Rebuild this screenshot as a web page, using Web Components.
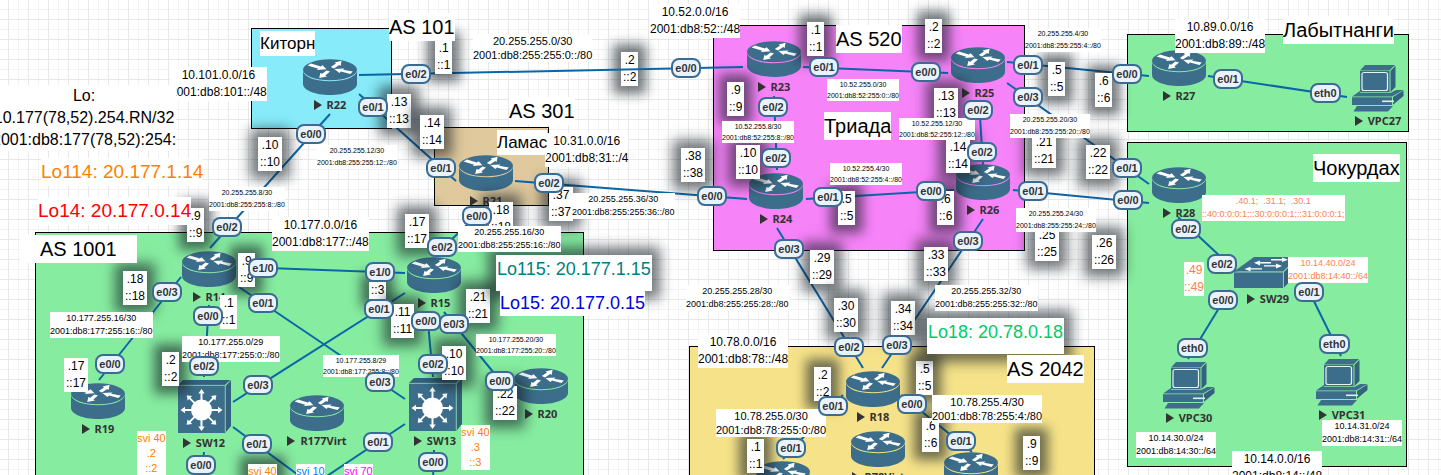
<!DOCTYPE html>
<html lang="ru">
<head>
<meta charset="utf-8">
<title>Network topology</title>
<style>
body { margin: 0; font-family: "Liberation Sans", Arial, sans-serif; color: #000; }
</style>
</head>
<body>
<topo-canvas>
  <topo-area x="251" y="28" w="141" h="101" tone="cyan"></topo-area>
  <topo-area x="434" y="127" w="115" h="79" tone="sand"></topo-area>
  <topo-area x="713" y="25" w="312" h="226" tone="pink"></topo-area>
  <topo-area x="1127" y="34" w="282" h="98" tone="green"></topo-area>
  <topo-area x="1127" y="142" w="280" h="325" tone="green"></topo-area>
  <topo-area x="35" y="232" w="549" h="320" tone="green"></topo-area>
  <topo-area x="689" y="346" w="406" h="206" tone="yellow"></topo-area>

  <topo-label x="621" y="52" kind="pair" glow>.2<br>::2</topo-label>

  <topo-links></topo-links>

  <topo-node x="303" y="59" kind="router">R22</topo-node>
  <topo-node x="459" y="155" kind="router">R21</topo-node>
  <topo-node x="747" y="41" kind="router">R23</topo-node>
  <topo-node x="951" y="47" kind="router">R25</topo-node>
  <topo-node x="749" y="173" kind="router">R24</topo-node>
  <topo-node x="956" y="164" kind="router">R26</topo-node>
  <topo-node x="1152" y="50" kind="router">R27</topo-node>
  <topo-node x="1152" y="167" kind="router">R28</topo-node>
  <topo-node x="182" y="251" kind="router">R14</topo-node>
  <topo-node x="407" y="257" kind="router">R15</topo-node>
  <topo-node x="71" y="383" kind="router">R19</topo-node>
  <topo-node x="290" y="395" kind="router">R177Virt</topo-node>
  <topo-node x="514" y="368" kind="router">R20</topo-node>
  <topo-node x="846" y="371" kind="router">R18</topo-node>
  <topo-node x="851" y="431" kind="router">R78Virt</topo-node>
  <topo-node x="756" y="461" kind="router"></topo-node>
  <topo-node x="944" y="452" kind="router"></topo-node>
  <topo-node x="177" y="380" kind="core">SW12</topo-node>
  <topo-node x="408" y="378" kind="core">SW13</topo-node>
  <topo-node x="1234" y="257" kind="switch">SW29</topo-node>
  <topo-node x="1351" y="65" kind="pc">VPC27</topo-node>
  <topo-node x="1162" y="362" kind="pc">VPC30</topo-node>
  <topo-node x="1315" y="359" kind="pc">VPC31</topo-node>

  <topo-label x="258" y="137" kind="pair" glow>.10<br>::10</topo-label>
  <topo-label x="187" y="208" kind="pair" glow>.9<br>::9</topo-label>
  <topo-label x="435" y="40" kind="pair" glow>.1<br>::1</topo-label>
  <topo-label x="387" y="94" kind="pair" glow>.13<br>::13</topo-label>
  <topo-label x="420" y="115" kind="pair" glow>.14<br>::14</topo-label>
  <topo-label x="681" y="148" kind="pair" glow>.38<br>::38</topo-label>
  <topo-label x="549" y="187" kind="pair" glow>.37<br>::37</topo-label>
  <topo-label x="405" y="214" kind="pair" glow>.17<br>::17</topo-label>
  <topo-label x="489" y="202" kind="pair" glow>.18<br>::18</topo-label>
  <topo-label x="807" y="22" kind="pair" glow>.1<br>::1</topo-label>
  <topo-label x="925" y="19" kind="pair" glow>.2<br>::2</topo-label>
  <topo-label x="727" y="82" kind="pair" glow>.9<br>::9</topo-label>
  <topo-label x="934" y="88" kind="pair" glow>.13<br>::13</topo-label>
  <topo-label x="736" y="145" kind="pair" glow>.10<br>::10</topo-label>
  <topo-label x="946" y="139" kind="pair" glow>.14<br>::14</topo-label>
  <topo-label x="838" y="191" kind="pair" glow>.5<br>::5</topo-label>
  <topo-label x="937" y="191" kind="pair" glow>.6<br>::6</topo-label>
  <topo-label x="1048" y="62" kind="pair" glow>.5<br>::5</topo-label>
  <topo-label x="1095" y="73" kind="pair" glow>.6<br>::6</topo-label>
  <topo-label x="1032" y="134" kind="pair" glow>.21<br>::21</topo-label>
  <topo-label x="1086" y="145" kind="pair" glow>.22<br>::22</topo-label>
  <topo-label x="1035" y="227" kind="pair" glow>.25<br>::25</topo-label>
  <topo-label x="1092" y="235" kind="pair" glow>.26<br>::26</topo-label>
  <topo-label x="123" y="271" kind="pair" glow>.18<br>::18</topo-label>
  <topo-label x="238" y="253" kind="pair" glow>.9<br>::9</topo-label>
  <topo-label x="220" y="295" kind="pair">.1<br>::1</topo-label>
  <topo-label x="162" y="352" kind="pair" glow>.2<br>::2</topo-label>
  <topo-label x="64" y="358" kind="pair">.17<br>::17</topo-label>
  <topo-label x="369" y="282" kind="pair" glow>::3</topo-label>
  <topo-label x="391" y="304" kind="pair" glow>.11<br>::11</topo-label>
  <topo-label x="466" y="289" kind="pair" glow>.21<br>::21</topo-label>
  <topo-label x="442" y="346" kind="pair" glow>.10<br>::10</topo-label>
  <topo-label x="493" y="386" kind="pair" glow>.22<br>::22</topo-label>
  <topo-label x="810" y="250" kind="pair" glow>.29<br>::29</topo-label>
  <topo-label x="924" y="247" kind="pair" glow>.33<br>::33</topo-label>
  <topo-label x="834" y="298" kind="pair" glow>.30<br>::30</topo-label>
  <topo-label x="891" y="301" kind="pair" glow>.34<br>::34</topo-label>
  <topo-label x="814" y="367" kind="pair" glow>.2<br>::2</topo-label>
  <topo-label x="916" y="361" kind="pair" glow>.5<br>::5</topo-label>
  <topo-label x="922" y="418" kind="pair" glow>.6<br>::6</topo-label>
  <topo-label x="747" y="439" kind="pair" glow>.1<br>::1</topo-label>
  <topo-label x="1023" y="436" kind="pair" glow>.9<br>::9</topo-label>
  <topo-label x="1184" y="262" tone="coral">.49<br>::49</topo-label>

  <topo-label x="496" y="255" kind="loop" tone="teal" glow>Lo115: 20.177.1.15</topo-label>
  <topo-label x="927" y="318" kind="loop" tone="mint" glow>Lo18: 20.78.0.18</topo-label>

  <topo-label x="170" y="67">10.101.0.0/16<br>2001:db8:101::/48</topo-label>
  <topo-label x="272" y="217">10.177.0.0/16<br>2001:db8:177::/48</topo-label>
  <topo-label x="650" y="4">10.52.0.0/16<br>2001:db8:52::/48</topo-label>
  <topo-label x="545" y="133">10.31.0.0/16<br>2001:db8:31::/4</topo-label>
  <topo-label x="1175" y="19">10.89.0.0/16<br>2001:db8:89::/48</topo-label>
  <topo-label x="698" y="334">10.78.0.0/16<br>2001:db8:78::/48</topo-label>
  <topo-label x="1232" y="451">10.14.0.0/16<br>2001:db8:14::/48</topo-label>

  <topo-label x="473" y="34" kind="s11">20.255.255.0/30<br>2001:db8:255:255:0::/80</topo-label>
  <topo-label x="716" y="409" kind="s11">10.78.255.0/30<br>2001:db8:78:255:0:/80</topo-label>
  <topo-label x="932" y="395" kind="s11">10.78.255.4/30<br>2001:db8:78:255:4:/80</topo-label>

  <topo-label x="572" y="193" kind="s9">20.255.255.36/30<br>2001:db8:255:255:36::/80</topo-label>
  <topo-label x="458" y="226" kind="s9">20.255.255.16/30<br>2001:db8:255:255:16::/80</topo-label>
  <topo-label x="686" y="285" kind="s9">20.255.255.28/30<br>2001:db8:255:255:28::/80</topo-label>
  <topo-label x="935" y="285" kind="s9">20.255.255.32/30<br>2001:db8:255:255:32::/80</topo-label>
  <topo-label x="50" y="312" kind="s9">10.177.255.16/30<br>2001:db8:177:255:16::/80</topo-label>
  <topo-label x="182" y="336" kind="s9">10.177.255.0/29<br>2001:db8:177:255:0::/80</topo-label>
  <topo-label x="1202" y="195" kind="s9" tone="coral">.40.1;&nbsp; .31.1;&nbsp; .30.1<br>::40:0:0:0:1;::30:0:0:0:1;::31:0:0:0:1;</topo-label>
  <topo-label x="1288" y="257" kind="s9" tone="coral">10.14.40.0/24<br>2001:db8:14:40::/64</topo-label>
  <topo-label x="1136" y="432" kind="s9">10.14.30.0/24<br>2001:db8:14:30::/64</topo-label>
  <topo-label x="1322" y="420" kind="s9">10.14.31.0/24<br>2001:db8:14:31::/64</topo-label>

  <topo-label x="209" y="187" kind="s7">20.255.255.8/30<br>2001:db8:255:255:8::/80</topo-label>
  <topo-label x="317" y="145" kind="s7">20.255.255.12/30<br>2001:db8:255:255:12::/80</topo-label>
  <topo-label x="1025" y="28" kind="s7">20.255.255.4/30<br>2001:db8:255:255:4::/80</topo-label>
  <topo-label x="1010" y="114" kind="s7">20.255.255.20/30<br>2001:db8:255:255:20::/80</topo-label>
  <topo-label x="1016" y="208" kind="s7">20.255.255.24/30<br>2001:db8:255:255:24::/80</topo-label>
  <topo-label x="827" y="79" kind="s7t">10.52.255.0/30<br>2001:db8:52:255:0::/80</topo-label>
  <topo-label x="722" y="121" kind="s7t">10.52.255.8/30<br>2001:db8:52:255:8::/80</topo-label>
  <topo-label x="899" y="118" kind="s7t">10.52.255.12/30<br>2001:db8:52:255:12::/80</topo-label>
  <topo-label x="830" y="163" kind="s7t">10.52.255.4/30<br>2001:db8:52:255:4::/80</topo-label>
  <topo-label x="323" y="355" kind="s7t">10.177.255.8/29<br>2001:db8:177:255:8::/80</topo-label>
  <topo-label x="476" y="334" kind="s7t">10.177.255.20/30<br>2001:db8:177:255:20::/80</topo-label>

  <topo-label x="389" y="13" kind="title">AS 101</topo-label>
  <topo-label x="509" y="97" kind="title">AS 301</topo-label>
  <topo-label x="836" y="25" kind="title">AS 520</topo-label>
  <topo-label x="20" y="235" kind="wide">AS 1001</topo-label>
  <topo-label x="1007" y="355" kind="title">AS 2042</topo-label>
  <topo-label x="824" y="112" kind="title">Триада</topo-label>
  <topo-label x="1283" y="16" kind="title">Лабытнанги</topo-label>
  <topo-label x="1313" y="154" kind="title">Чокурдах</topo-label>
  <topo-label x="260" y="31" kind="city">Киторн</topo-label>
  <topo-label x="497" y="130" kind="city">Ламас</topo-label>

  <topo-label x="-8" y="85" kind="note">Lo:<br>10.177(78,52).254.RN/32<br>2001:db8:177(78,52):254:</topo-label>
  <topo-label x="41" y="158" kind="lo" tone="orange">Lo114: 20.177.1.14</topo-label>
  <topo-label x="38" y="197" kind="lo" tone="red">Lo14: 20.177.0.14</topo-label>
  <topo-label x="500" y="290" kind="lo18" tone="blue">Lo15: 20.177.0.15</topo-label>

  <topo-label x="137" y="431" kind="svi" tone="orange">svi 40<br>.2<br>::2</topo-label>
  <topo-label x="461" y="425" kind="svi" tone="orange">svi 40<br>.3<br>::3</topo-label>
  <topo-label x="248" y="464" kind="svi" tone="orange" glow>svi 40</topo-label>
  <topo-label x="296" y="464" kind="svi" tone="azure">svi 10</topo-label>
  <topo-label x="344" y="464" kind="svi" tone="magenta">svi 70</topo-label>

  <topo-port x="401" y="64">e0/2</topo-port>
  <topo-port x="358" y="97">e0/1</topo-port>
  <topo-port x="296" y="124">e0/0</topo-port>
  <topo-port x="212" y="217">e0/2</topo-port>
  <topo-port x="671" y="58">e0/0</topo-port>
  <topo-port x="426" y="158">e0/1</topo-port>
  <topo-port x="462" y="206">e0/0</topo-port>
  <topo-port x="534" y="173">e0/2</topo-port>
  <topo-port x="697" y="186">e0/0</topo-port>
  <topo-port x="427" y="237">e0/2</topo-port>
  <topo-port x="809" y="57">e0/1</topo-port>
  <topo-port x="911" y="62">e0/0</topo-port>
  <topo-port x="1013" y="55">e0/1</topo-port>
  <topo-port x="1013" y="87">e0/3</topo-port>
  <topo-port x="758" y="97">e0/2</topo-port>
  <topo-port x="963" y="100">e0/2</topo-port>
  <topo-port x="761" y="148">e0/2</topo-port>
  <topo-port x="967" y="142">e0/2</topo-port>
  <topo-port x="813" y="187">e0/1</topo-port>
  <topo-port x="916" y="181">e0/0</topo-port>
  <topo-port x="1018" y="181">e0/1</topo-port>
  <topo-port x="774" y="239">e0/3</topo-port>
  <topo-port x="953" y="231">e0/3</topo-port>
  <topo-port x="1112" y="64">e0/0</topo-port>
  <topo-port x="1213" y="69">e0/1</topo-port>
  <topo-port x="1310" y="83">eth0</topo-port>
  <topo-port x="1112" y="158">e0/1</topo-port>
  <topo-port x="1113" y="190">e0/0</topo-port>
  <topo-port x="1171" y="219">e0/2</topo-port>
  <topo-port x="1207" y="254">e0/2</topo-port>
  <topo-port x="1208" y="290">e0/0</topo-port>
  <topo-port x="1294" y="282">e0/1</topo-port>
  <topo-port x="1177" y="338">eth0</topo-port>
  <topo-port x="1319" y="334">eth0</topo-port>
  <topo-port x="152" y="282">e0/3</topo-port>
  <topo-port x="248" y="258">e1/0</topo-port>
  <topo-port x="248" y="293">e0/1</topo-port>
  <topo-port x="193" y="306">e0/0</topo-port>
  <topo-port x="95" y="354">e0/0</topo-port>
  <topo-port x="189" y="356">e0/2</topo-port>
  <topo-port x="243" y="375">e0/3</topo-port>
  <topo-port x="242" y="434">e0/1</topo-port>
  <topo-port x="186" y="455">e0/0</topo-port>
  <topo-port x="365" y="262">e1/0</topo-port>
  <topo-port x="364" y="299">e0/1</topo-port>
  <topo-port x="411" y="311">e0/0</topo-port>
  <topo-port x="439" y="314">e0/3</topo-port>
  <topo-port x="418" y="354">e0/2</topo-port>
  <topo-port x="365" y="372">e0/3</topo-port>
  <topo-port x="485" y="371">e0/0</topo-port>
  <topo-port x="363" y="432">e0/1</topo-port>
  <topo-port x="418" y="452">e0/0</topo-port>
  <topo-port x="834" y="337">e0/2</topo-port>
  <topo-port x="882" y="335">e0/3</topo-port>
  <topo-port x="818" y="396">e0/1</topo-port>
  <topo-port x="897" y="394">e0/0</topo-port>
  <topo-port x="776" y="438">e0/1</topo-port>
  <topo-port x="946" y="431">e0/1</topo-port>
</topo-canvas>

<script>
/* Base for everything that sits at a free place on the canvas. */
class Placed extends HTMLElement {
  connectedCallback() {
    const root = this.shadowRoot || this.attachShadow({ mode: "open" });
    root.innerHTML = `<style>:host{position:absolute;box-sizing:border-box}${this.css()}</style>${this.html()}`;
    this.style.left = this.getAttribute("x") + "px";
    this.style.top = this.getAttribute("y") + "px";
  }
  css() { return ""; }
  html() { return "<slot></slot>"; }
}

customElements.define("topo-canvas", class extends HTMLElement {
  constructor() {
    super();
    this.attachShadow({ mode: "open" }).innerHTML = `<style>
      :host{display:block;position:relative;height:100vh;overflow:hidden;background-color:#fff;
        background-image:
          linear-gradient(90deg,#e8e8e8 1px,transparent 1px),linear-gradient(#e8e8e8 1px,transparent 1px),
          linear-gradient(90deg,#f3f3f3 1px,transparent 1px),linear-gradient(#f3f3f3 1px,transparent 1px);
        background-size:20px 20px;
        background-position:8px 0,0 19px,18px 0,0 9px}
    </style><slot></slot>`;
  }
});

customElements.define("topo-area", class extends Placed {
  css() {
    return `:host{display:block;border:1px solid #000;width:${this.getAttribute("w")}px;height:${this.getAttribute("h")}px}
      :host([tone=cyan]){background:#87ebf9}
      :host([tone=sand]){background:#dfc99d}
      :host([tone=pink]){background:#f783f9}
      :host([tone=green]){background:#86eca0}
      :host([tone=yellow]){background:#f6e389}`;
  }
});

customElements.define("topo-label", class extends Placed {
  css() {
    return `:host{display:block;background:#fff;white-space:nowrap;text-align:center;font-size:12px;line-height:17px}
      :host([kind=pair]){padding:0 2px}
      :host([kind=s11]){font-size:11px;line-height:14px}
      :host([kind=s9]){font-size:9px;line-height:13px}
      :host([kind=s7]){font-size:7px;line-height:12px}
      :host([kind=s7t]){font-size:7px;line-height:11px}
      :host([kind=title]){font-size:20px;line-height:28px}
      :host([kind=wide]){font-size:20px;line-height:28px;padding:0 20px}
      :host([kind=city]){font-size:17px;line-height:25px}
      :host([kind=note]){font-size:16px;line-height:22px}
      :host([kind=lo]){font-size:19px;line-height:28px}
      :host([kind=lo18]){font-size:18px;line-height:26px}
      :host([kind=loop]){font-size:18px;line-height:28px;padding:0 1px 8px}
      :host([kind=svi]){font-size:11px;line-height:15px}
      :host([tone=coral]){color:#ff7f50}
      :host([tone=teal]){color:#008080}
      :host([tone=mint]){color:#00cc66}
      :host([tone=orange]){color:#ff8000}
      :host([tone=red]){color:#f00}
      :host([tone=blue]){color:#0000e0}
      :host([tone=azure]){color:#007fff}
      :host([tone=magenta]){color:#f0f}
      :host([glow]){box-shadow:0 0 12px 8px rgba(20,30,36,.6)}`;
  }
});

customElements.define("topo-port", class extends Placed {
  css() {
    return `:host{display:block;padding:0 2px;border:2px solid #3b6b92;border-radius:8px;background:#e9f3fd;
      color:#333;font-size:11px;font-weight:bold;line-height:16px;min-width:30px;text-align:center}`;
  }
});

const BLUE = "#3c6e8c";
const ICONS = {
  router: `<svg width="54" height="36" viewBox="0 0 54 36" fill="${BLUE}">
    <ellipse cx="27" cy="10.8" rx="27" ry="10.5"/>
    <path d="M0 12.5C2 18.5 13 22.3 27 22.3S52 18.5 54 12.5V25C54 31 42 36 27 36S0 31 0 25Z"/>
    <g fill="#fff"><path d="M4.5 6.5L8 4.6L17.8 7.4L19.6 6.2L23.4 10.2L13.6 11L15.4 9.7Z"/>
    <path d="M49.8 12.6L47.4 15L38 12.6L36.4 14L31.4 10.1L41.6 9.4L40 10.7Z"/>
    <path d="M27.8 8L33 4.5L31.6 3.6L38.6 1.8L37.6 6.9L36.2 6L31 9.4Z"/>
    <path d="M27 12.4L23.4 11.6L19.2 14.7L17.4 14L16.2 19L24 17.6L22.3 16.6Z"/></g></svg>`,
  core: `<svg width="53" height="53" viewBox="0 0 53 53">
    <path d="M0 5L5 0H53L47 5Z" fill="#34617d"/><path d="M48 5.5L53 .5V46L48 52Z" fill="#34617d"/>
    <path d="M0 5.5H47.5V53H0Z" fill="${BLUE}"/><path d="M0 5.3H46.8L52.5 .3M47.2 5.5V52.5" fill="none" stroke="#86c8a8" stroke-width=".8"/>
    <g transform="translate(23.5 30)" fill="#fff"><circle r="10.5"/>
    ${[0,45,90,135,180,225,270,315].map(a => `<path transform="rotate(${a})" d="M-1 -9V-16.5H-3.2L0 -21L3.2 -16.5H1V-9Z"/>`).join("")}</g></svg>`,
  switch: `<svg width="68" height="31" viewBox="0 0 68 31">
    <path d="M0 14.5L20 0H64L49 14.5Z" fill="${BLUE}"/><path d="M0 15.3H49V31H0Z" fill="${BLUE}"/><path d="M50 15L64 1V16L50 30.5Z" fill="#34617d"/>
    <path d="M0 15H49.3L64 .6M49.4 15V31" fill="none" stroke="#86c8a8" stroke-width=".8"/>
    <g fill="#fff"><path d="M20 5.8L26 3.4V5H37V6.6H26V8.4Z"/><path d="M10.5 12L16.5 9.8V11.2H28V12.6H16.5V14.2Z"/>
    <path d="M54 2.8L48 .4V2H37V3.4H48V5Z"/><path d="M48 9L42 6.6V8.2H30V9.6H42V11.4Z"/></g></svg>`,
  pc: `<svg width="52" height="47" viewBox="0 0 52 47">
    <path d="M8 5.5L13 0H43L37.5 5.5Z" fill="${BLUE}"/><path d="M38.5 6L43.5 .8V22L38.5 27Z" fill="#34617d"/>
    <path d="M8 6H37.5V27H8Z" fill="${BLUE}"/><rect x="10" y="7.5" width="25.5" height="18" rx="2" fill="${BLUE}" stroke="#e6f3ee" stroke-width="1.2"/>
    <path d="M0 31.5L8 26V27.8H38.8L44 25H51.5L40 31.5Z" fill="${BLUE}"/><path d="M0 32.3H40V40H0Z" fill="${BLUE}"/>
    <path d="M41 32L51.5 25.6V31L41 39.8Z" fill="#34617d"/><rect x="30" y="35.5" width="12" height="1.6" fill="#dfeef0"/>
    <path d="M5 41H41L36 46.5H1.5Z" fill="${BLUE}"/></svg>`
};

customElements.define("topo-node", class extends Placed {
  css() {
    const gap = { router: 2, core: 2, switch: 3, pc: 1 }[this.getAttribute("kind")];
    return `:host{display:block;width:54px}
      .box{display:flex;flex-direction:column;align-items:center;gap:${gap}px}
      svg{display:block;flex:none}
      .name{display:flex;align-items:center;gap:5px;white-space:nowrap;
        font:bold 11px/15px "Noto Sans","Open Sans",sans-serif;color:#333}
      .name::before{content:"";border:solid transparent;border-width:5px 0 5px 8px;border-left-color:#333}
      :host([kind=switch]){width:68px}`;
  }
  html() {
    return `<div class="box">${ICONS[this.getAttribute("kind")]}<div class="name"><slot></slot></div></div>`;
  }
});

/* Cables: x1 y1 x2 y2 */
const LINKS = [
  [359,75,743,67],[359,94,456,181],[330,114,210,248],[515,181,747,199],[485,208,435,255],
  [803,67,948,73],[774,96,777,170],[979,100,983,165],[806,199,954,190],[1007,62,1149,76],
  [1007,83,1149,184],[1013,190,1149,203],[777,228,863,368],[983,219,882,368],[1208,76,1347,97],
  [1178,217,1237,272],[1230,290,1188,359],[1302,277,1341,356],[240,267,405,273],[181,277,99,380],
  [209,305,204,377],[239,287,405,399],[405,293,233,402],[427,312,433,377],[444,312,512,395],
  [233,427,305,480],[405,424,318,482],[204,452,201,480],[434,450,433,480],[843,395,783,459],[901,395,972,452]
];
customElements.define("topo-links", class extends HTMLElement {
  constructor() {
    super();
    this.attachShadow({ mode: "open" }).innerHTML = `<style>
      :host{position:absolute;inset:0}
      svg{display:block;width:100%;height:100%;overflow:visible}
    </style><svg stroke="#0b66a8" stroke-width="2">${LINKS.map(([a,b,c,d]) => `<line x1="${a}" y1="${b}" x2="${c}" y2="${d}"/>`).join("")}</svg>`;
  }
});
</script>
</body>
</html>
